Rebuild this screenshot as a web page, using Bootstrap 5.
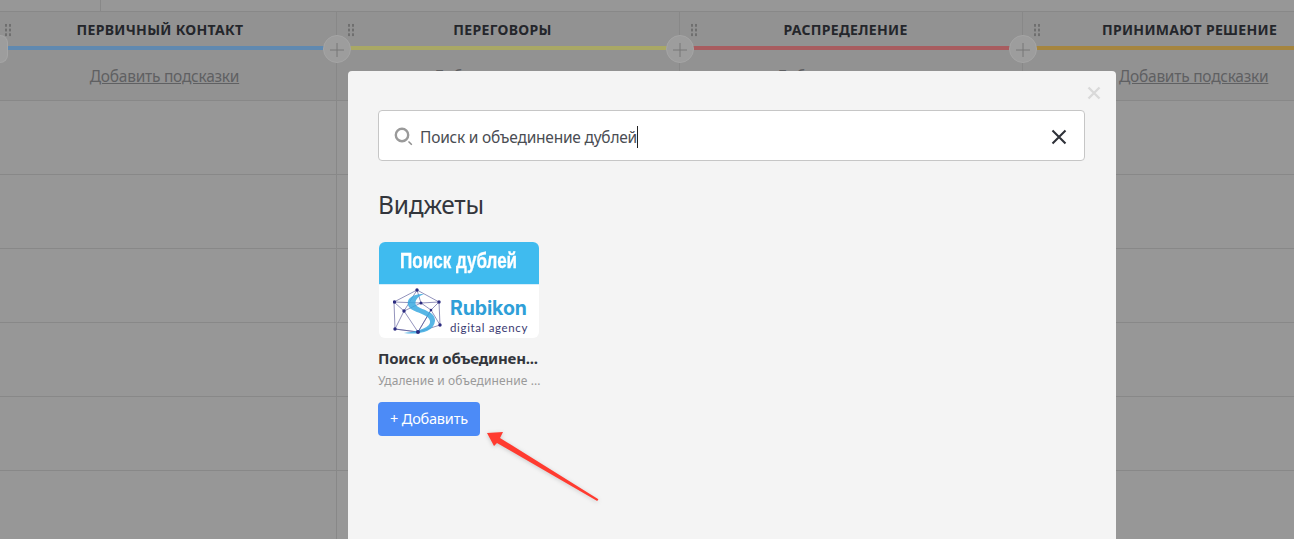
<!doctype html>
<html lang="ru">
<head>
<meta charset="utf-8">
<title>Воронка</title>
<link href="https://cdn.jsdelivr.net/npm/bootstrap@5.3.0/dist/css/bootstrap.min.css" rel="stylesheet">
<style>
html,body{height:539px;overflow:hidden}
body{background:#979797;font-family:"Noto Sans","Open Sans",sans-serif;color:#2e3138;position:relative}
.top-strip{height:12px;border-bottom:1px solid #888}
.top-cell{width:101px;height:11px;border-right:1px solid #888}
.board-col{width:343px;flex:none;border-right:1px solid #888;height:527px}
.board-col.col-first{width:337px}
.board-col.col-last{width:271px;border-right:0}
.col-head{height:89px;background:#929292;border-bottom:1px solid #888;position:relative;padding-top:9px}
.col-title{font-size:14px;font-weight:700;line-height:18px;letter-spacing:.3px;color:#24262b;text-align:center;padding-right:11px;white-space:nowrap}
.col-bar{height:4px;margin-top:7px}
.col-hint{display:block;text-align:center;margin-top:15px;font-size:15.5px;line-height:22px;color:#5f6062;text-decoration:underline;letter-spacing:-.25px;white-space:nowrap}
.col-first .col-title{padding-right:16px}
.col-first .col-hint{padding-right:7px}
.col-last .col-title{text-align:left;padding:0 0 0 79px}
.col-last .col-hint{text-align:left;padding-left:96px}
.grip{position:absolute;left:10px;top:11px;width:8px;height:14px;background-image:radial-gradient(circle,#6f6f6f 1.2px,transparent 1.4px);background-size:4px 4.7px}
.col-first .grip{left:4px}
.add-round{position:absolute;right:-15px;top:23px;width:28px;height:28px;border-radius:50%;background:#9d9d9d;border:1px solid #a5a5a5;z-index:2;color:#777}
.add-edge{right:auto;left:0;width:8px;border-radius:0 14px 14px 0;border-left:0}
.board-row{height:74px;border-bottom:1px solid #888}
.dialog-box{position:absolute;left:348px;top:71px;width:768px;height:468px;overflow:hidden;background:#f4f4f4;border-radius:4px 4px 0 0;padding:39px 30px 0;z-index:5}
.dialog-close{position:absolute;right:15px;top:15px;width:14px;height:14px;color:#d9d9d9}
.search-box{height:51px;background:#fff;border:1px solid #c6c6c6;border-radius:4px;padding:2px 17px 0 15px;width:707px}
.search-value{font-size:15.5px;letter-spacing:-.22px;color:#4a4d53;line-height:22px;border-right:1px solid #222;margin-left:7px;white-space:nowrap}
.section-name{font-size:24.5px;font-weight:400;letter-spacing:-.2px;line-height:34px;margin:27px 0 20px;color:#33363c}
.thumb{width:160px;height:96px;margin-left:1px;border-radius:6px;overflow:hidden;background:#fff}
.thumb-band{height:42px;background:#3fbbef;color:#fff;font-family:"Liberation Sans",sans-serif;font-weight:700;font-size:22px;line-height:37px;text-align:center;white-space:nowrap;-webkit-text-stroke:.3px #fff}
.thumb-band span{display:inline-block;transform:scaleX(.775)}
.thumb-logo{height:54px;padding-left:14px;gap:7px;border-top:1px solid #d8eefa}
.brand-text{padding-top:9px}
.brand-name{font-family:"Inter","Liberation Sans",sans-serif;font-weight:700;font-size:19.5px;line-height:19px;color:#2f9fd8;letter-spacing:-.1px}
.brand-sub{font-family:"Lato","Liberation Sans",sans-serif;font-size:11.5px;line-height:11px;margin-top:4px;letter-spacing:.65px;color:#3a3a72;white-space:nowrap}
.item-name{font-size:15px;font-weight:700;line-height:20px;margin:10px 0 0 0;color:#33363c;white-space:nowrap;letter-spacing:-.2px}
.item-note{font-size:12px;line-height:18px;margin:4px 0 12px;color:#9a9a9a;white-space:nowrap;letter-spacing:.1px}
.add-widget{background:#4c8bf7;border:0;border-radius:4px;color:#fff;height:34px;width:102px;font-size:14.5px;padding:0;letter-spacing:-.2px}
.pointer-arrow{position:absolute;left:480px;top:425px;z-index:6;filter:drop-shadow(0 1px 2px rgba(0,0,0,.18))}
</style>
</head>
<body>
<div class="top-strip"><div class="top-cell"></div></div>
<div class="d-flex">
  <section class="board-col col-first">
    <div class="col-head"><i class="grip"></i><span class="add-round add-edge"></span><button class="add-round p-0" aria-label="Добавить"><svg width="26" height="26" viewBox="0 0 26 26"><path d="M13 6v14M6 13h14" stroke="#777" fill="none"/></svg></button>
      <div class="col-title">ПЕРВИЧНЫЙ КОНТАКТ</div><div class="col-bar" style="background:#6089b0"></div><a class="col-hint">Добавить подсказки</a></div>
    <div class="board-row"></div><div class="board-row"></div><div class="board-row"></div><div class="board-row"></div><div class="board-row"></div>
  </section>
  <section class="board-col">
    <div class="col-head"><i class="grip"></i><button class="add-round p-0" aria-label="Добавить"><svg width="26" height="26" viewBox="0 0 26 26"><path d="M13 6v14M6 13h14" stroke="#777" fill="none"/></svg></button>
      <div class="col-title">ПЕРЕГОВОРЫ</div><div class="col-bar" style="background:#a9a865"></div><a class="col-hint">Добавить подсказки</a></div>
    <div class="board-row"></div><div class="board-row"></div><div class="board-row"></div><div class="board-row"></div><div class="board-row"></div>
  </section>
  <section class="board-col">
    <div class="col-head"><i class="grip"></i><button class="add-round p-0" aria-label="Добавить"><svg width="26" height="26" viewBox="0 0 26 26"><path d="M13 6v14M6 13h14" stroke="#777" fill="none"/></svg></button>
      <div class="col-title">РАСПРЕДЕЛЕНИЕ</div><div class="col-bar" style="background:#a85c5f"></div><a class="col-hint">Добавить подсказки</a></div>
    <div class="board-row"></div><div class="board-row"></div><div class="board-row"></div><div class="board-row"></div><div class="board-row"></div>
  </section>
  <section class="board-col col-last">
    <div class="col-head"><i class="grip"></i>
      <div class="col-title">ПРИНИМАЮТ РЕШЕНИЕ</div><div class="col-bar" style="background:#a5853f"></div><a class="col-hint">Добавить подсказки</a></div>
    <div class="board-row"></div><div class="board-row"></div><div class="board-row"></div><div class="board-row"></div><div class="board-row"></div>
  </section>
</div>

<div class="dialog-box">
  <svg class="dialog-close" viewBox="0 0 14 14"><path d="M1.5 1.5l11 11M12.5 1.5l-11 11" stroke="currentColor" stroke-width="2.4" fill="none"/></svg>
  <div class="search-box d-flex align-items-center">
    <svg width="19" height="19" viewBox="0 0 19 19"><circle cx="8" cy="8" r="6.2" fill="none" stroke="#9a9a9a" stroke-width="2.4"/><path d="M14.500 14.500l3.300 3.300" stroke="#8e8e8e" stroke-width="1.5"/></svg>
    <span class="search-value">Поиск и объединение дублей</span>
    <svg class="ms-auto" width="16" height="16" viewBox="0 0 16 16"><path d="M1.500 1.500l13 13M14.500 1.500l-13 13" stroke="#2e3138" stroke-width="2.1" fill="none"/></svg>
  </div>
  <h2 class="section-name">Виджеты</h2>
  <div class="thumb">
    <div class="thumb-band"><span>Поиск дублей</span></div>
    <div class="thumb-logo d-flex align-items-center">
      <svg width="50" height="48" viewBox="0 0 50 48"><g fill="none" stroke="#4a4a8e" stroke-width=".6"><path d="M24 2L46 14 47 37 25 44 2 41 1 14Z"/><path d="M24 2L11 23 1 14 28 15 46 14M11 23L2 41 25 44 38 22 47 37M28 15L38 22 46 14M24 2L28 15M11 23L28 15M25 44L11 23M38 22L25 44"/></g>
        <path d="M31 6C18 6 12 12 16 19c4 6 19 6 21 14 1 6-10 10-26 12 14 2 30-1 31-12C43 23 27 22 23 17c-2-4 2-9 8-11Z" fill="#3aa9e0" opacity=".85"/>
        <g fill="#2c2c80"><circle cx="24" cy="2" r="1.7"/><circle cx="46" cy="14" r="1.7"/><circle cx="47" cy="37" r="1.7"/><circle cx="25" cy="44" r="2"/><circle cx="2" cy="41" r="1.7"/><circle cx="1.500" cy="14" r="1.7"/><circle cx="11" cy="23" r="1.7"/><circle cx="28" cy="15" r="1.5"/><circle cx="38" cy="22" r="1.3"/></g></svg>
      <div class="brand-text"><div class="brand-name">Rubikon</div><div class="brand-sub">digital agency</div></div>
    </div>
  </div>
  <p class="item-name">Поиск и объединен...</p>
  <p class="item-note">Удаление и объединение ...</p>
  <button class="add-widget">+ Добавить</button>
</div>
<svg class="pointer-arrow" width="130" height="85" viewBox="0 0 130 85"><path d="M7 8L23 7 20 13 118.400 74.200 117.200 76 17 18 14 21Z" fill="#ff3b30"/></svg>
</body>
</html>
